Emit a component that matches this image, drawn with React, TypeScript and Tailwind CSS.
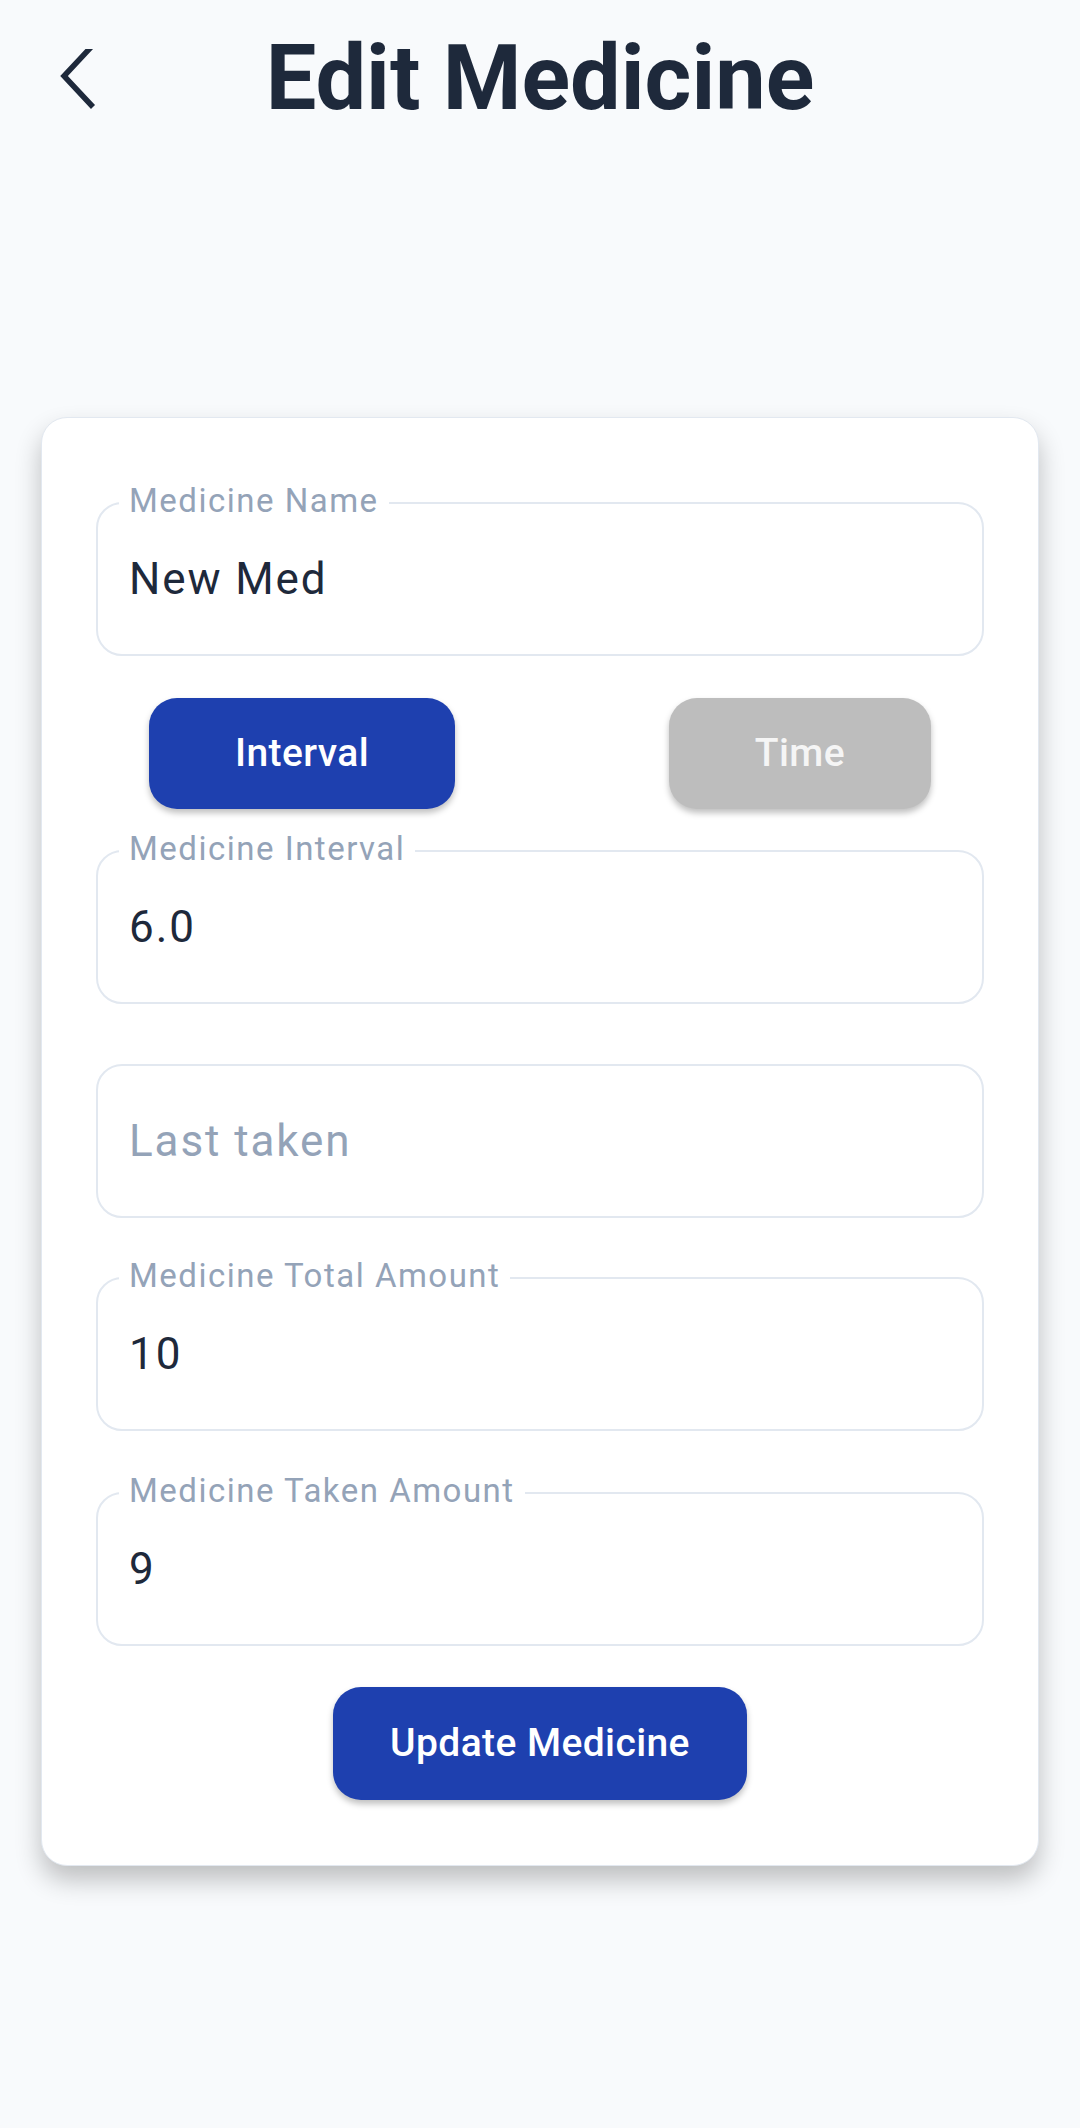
const Field = ({ label, value, placeholder }: { label?: string; value?: string; placeholder?: string }) => {
  return (
    <div className="relative flex h-[154px] items-center rounded-[26px] border-2 border-[#e2e8f0] px-[31px]">
      {label && (
        <span className="absolute left-[21px] top-[-20px] bg-white px-[10px] text-[33px] leading-none tracking-[1.5px] text-[#94a3b8]">
          {label}
        </span>
      )}
      {value ? (
        <span className="text-[44px] leading-none tracking-[1.9px] text-[#1e293b]">{value}</span>
      ) : (
        <span className="text-[44px] leading-none tracking-[1.9px] text-[#94a3b8]">{placeholder}</span>
      )}
    </div>
  );
};

const App = () => {
  return (
    <div className="min-h-[2128px] w-[1080px] bg-[#f8fafc] font-['Roboto',sans-serif]">
      <div className="grid grid-cols-[1fr_auto_1fr] items-center pt-[34px]">
        <div className="pl-[58px]">
          <svg width="40" height="60" viewBox="0 0 40 60" fill="none">
            <polyline points="35,-4 6,27 35,58" stroke="#1e293b" strokeWidth="5.5" fill="none" />
          </svg>
        </div>
        <h1 className="text-[90px] font-bold leading-none text-[#1e293b]">Edit Medicine</h1>
        <div />
      </div>

      <div className="mx-[41px] mt-[293px] rounded-[26px] border border-[#e2e8f0] bg-white px-[54px] pb-[65px] pt-[84px] shadow-[0_14px_26px_rgba(0,0,0,0.24)]">
        <Field label="Medicine Name" value="New Med" />

        <div className="mt-[42px] flex justify-between px-[53px]">
          <button className="h-[111px] rounded-[28px] bg-[#1e40af] px-[86px] text-[39px] font-medium tracking-[0.4px] text-white shadow-[0_4px_6px_rgba(0,0,0,0.25)]">
            Interval
          </button>
          <button className="h-[111px] rounded-[28px] bg-[#bdbdbd] px-[86px] text-[39px] font-medium tracking-[0.4px] text-[#f5f5f5] shadow-[0_4px_6px_rgba(0,0,0,0.25)]">
            Time
          </button>
        </div>

        <div className="mt-[41px]">
          <Field label="Medicine Interval" value="6.0" />
        </div>
        <div className="mt-[60px]">
          <Field placeholder="Last taken" />
        </div>
        <div className="mt-[59px]">
          <Field label="Medicine Total Amount" value="10" />
        </div>
        <div className="mt-[61px]">
          <Field label="Medicine Taken Amount" value="9" />
        </div>

        <div className="mt-[41px] flex justify-center">
          <button className="h-[113px] rounded-[28px] bg-[#1e40af] px-[57px] text-[39px] font-medium tracking-[0.4px] text-white shadow-[0_4px_6px_rgba(0,0,0,0.25)]">
            Update Medicine
          </button>
        </div>
      </div>
    </div>
  );
};

export default App;
